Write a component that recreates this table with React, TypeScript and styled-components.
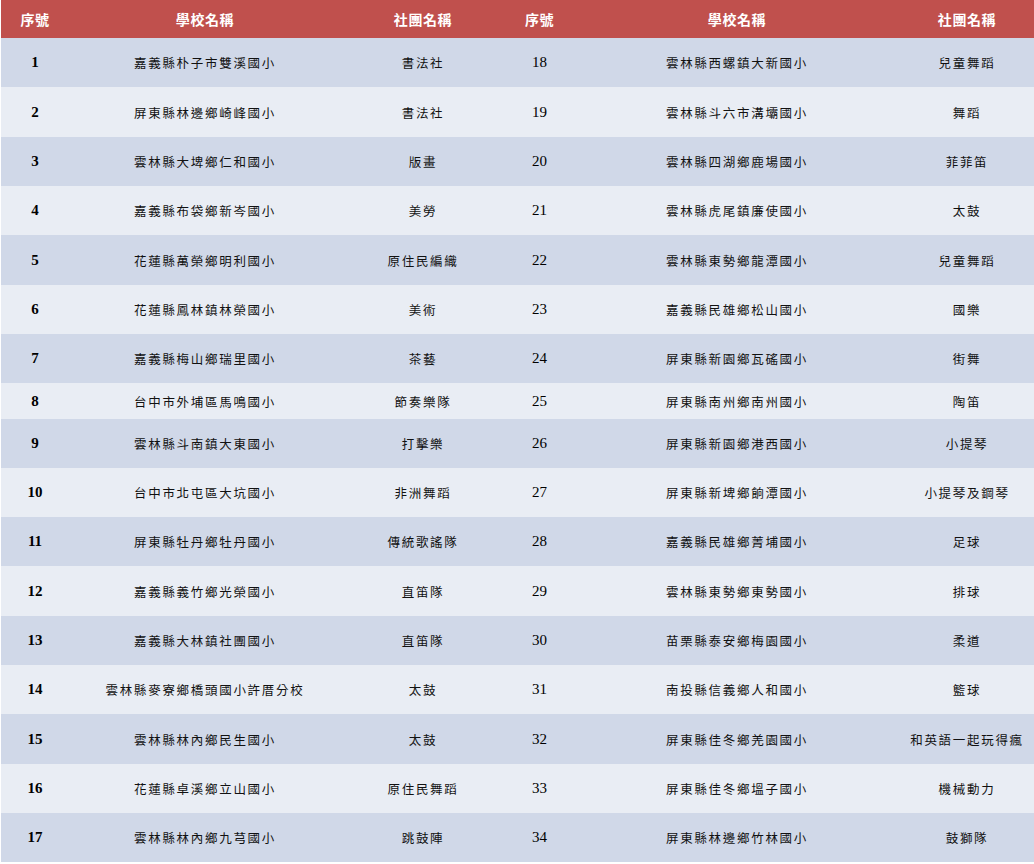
import React from 'react';
import styled, { createGlobalStyle } from 'styled-components';

const GlobalStyle = createGlobalStyle`
  html, body {
    margin: 0;
    padding: 0;
    background: #ffffff;
  }
`;

interface Club {
  no: number;
  school: string;
  club: string;
}

const left: Club[] = [
  { no: 1, school: '嘉義縣朴子市雙溪國小', club: '書法社' },
  { no: 2, school: '屏東縣林邊鄉崎峰國小', club: '書法社' },
  { no: 3, school: '雲林縣大埤鄉仁和國小', club: '版畫' },
  { no: 4, school: '嘉義縣布袋鄉新岑國小', club: '美勞' },
  { no: 5, school: '花蓮縣萬榮鄉明利國小', club: '原住民編織' },
  { no: 6, school: '花蓮縣鳳林鎮林榮國小', club: '美術' },
  { no: 7, school: '嘉義縣梅山鄉瑞里國小', club: '茶藝' },
  { no: 8, school: '台中市外埔區馬鳴國小', club: '節奏樂隊' },
  { no: 9, school: '雲林縣斗南鎮大東國小', club: '打擊樂' },
  { no: 10, school: '台中市北屯區大坑國小', club: '非洲舞蹈' },
  { no: 11, school: '屏東縣牡丹鄉牡丹國小', club: '傳統歌謠隊' },
  { no: 12, school: '嘉義縣義竹鄉光榮國小', club: '直笛隊' },
  { no: 13, school: '嘉義縣大林鎮社團國小', club: '直笛隊' },
  { no: 14, school: '雲林縣麥寮鄉橋頭國小許厝分校', club: '太鼓' },
  { no: 15, school: '雲林縣林內鄉民生國小', club: '太鼓' },
  { no: 16, school: '花蓮縣卓溪鄉立山國小', club: '原住民舞蹈' },
  { no: 17, school: '雲林縣林內鄉九芎國小', club: '跳鼓陣' },
];

const right: Club[] = [
  { no: 18, school: '雲林縣西螺鎮大新國小', club: '兒童舞蹈' },
  { no: 19, school: '雲林縣斗六市溝壩國小', club: '舞蹈' },
  { no: 20, school: '雲林縣四湖鄉鹿場國小', club: '菲菲笛' },
  { no: 21, school: '雲林縣虎尾鎮廉使國小', club: '太鼓' },
  { no: 22, school: '雲林縣東勢鄉龍潭國小', club: '兒童舞蹈' },
  { no: 23, school: '嘉義縣民雄鄉松山國小', club: '國樂' },
  { no: 24, school: '屏東縣新園鄉瓦磘國小', club: '街舞' },
  { no: 25, school: '屏東縣南州鄉南州國小', club: '陶笛' },
  { no: 26, school: '屏東縣新園鄉港西國小', club: '小提琴' },
  { no: 27, school: '屏東縣新埤鄉餉潭國小', club: '小提琴及鋼琴' },
  { no: 28, school: '嘉義縣民雄鄉菁埔國小', club: '足球' },
  { no: 29, school: '雲林縣東勢鄉東勢國小', club: '排球' },
  { no: 30, school: '苗栗縣泰安鄉梅園國小', club: '柔道' },
  { no: 31, school: '南投縣信義鄉人和國小', club: '籃球' },
  { no: 32, school: '屏東縣佳冬鄉羌園國小', club: '和英語一起玩得瘋' },
  { no: 33, school: '屏東縣佳冬鄉塭子國小', club: '機械動力' },
  { no: 34, school: '屏東縣林邊鄉竹林國小', club: '鼓獅隊' },
];

const rowHeights = [49, 50, 49, 49, 50, 49, 49, 36, 49, 49, 49, 50, 49, 49, 50, 49, 49];

const Page = styled.div`
  padding: 0 0 2px 1px;
`;

const Table = styled.table`
  width: 1033px;
  border-collapse: collapse;
  table-layout: fixed;
`;

const HeadRow = styled.tr`
  height: 38px;
  background: #c0504d;
`;

const HeadCell = styled.th`
  padding: 0;
  color: #ffffff;
  font-family: 'Noto Sans CJK TC', 'Liberation Serif', serif;
  font-size: 14px;
  font-weight: 700;
  letter-spacing: 0.6px;
  text-align: center;
  vertical-align: middle;
`;

const Row = styled.tr<{ $alt: boolean }>`
  background: ${(p) => (p.$alt ? '#e9edf4' : '#d0d8e8')};
`;

const NumCell = styled.td<{ $bold?: boolean }>`
  padding: 0;
  text-align: center;
  vertical-align: middle;
  font-family: 'Liberation Serif', 'Times New Roman', serif;
  font-size: 15px;
  font-weight: ${(p) => (p.$bold ? 700 : 400)};
  color: #000000;
`;

const TextCell = styled.td`
  padding: 0;
  text-align: center;
  vertical-align: middle;
  font-family: 'Noto Sans CJK TC', sans-serif;
  font-size: 12.5px;
  letter-spacing: 1.7px;
  color: #111111;
  white-space: nowrap;
`;

const columns = [68, 272, 164, 69, 326, 134];
const headers = ['序號', '學校名稱', '社團名稱', '序號', '學校名稱', '社團名稱'];

const App: React.FC = () => {
  return (
    <Page>
      <GlobalStyle />
      <Table>
        <colgroup>
          {columns.map((w, i) => (
            <col key={i} style={{ width: w }} />
          ))}
        </colgroup>
        <thead>
          <HeadRow>
            {headers.map((h, i) => (
              <HeadCell key={i}>{h}</HeadCell>
            ))}
          </HeadRow>
        </thead>
        <tbody>
          {left.map((l, i) => {
            const r = right[i];
            return (
              <Row key={l.no} $alt={i % 2 === 1} style={{ height: rowHeights[i] }}>
                <NumCell $bold>{l.no}</NumCell>
                <TextCell>{l.school}</TextCell>
                <TextCell>{l.club}</TextCell>
                <NumCell>{r.no}</NumCell>
                <TextCell>{r.school}</TextCell>
                <TextCell>{r.club}</TextCell>
              </Row>
            );
          })}
        </tbody>
      </Table>
    </Page>
  );
};

export default App;
